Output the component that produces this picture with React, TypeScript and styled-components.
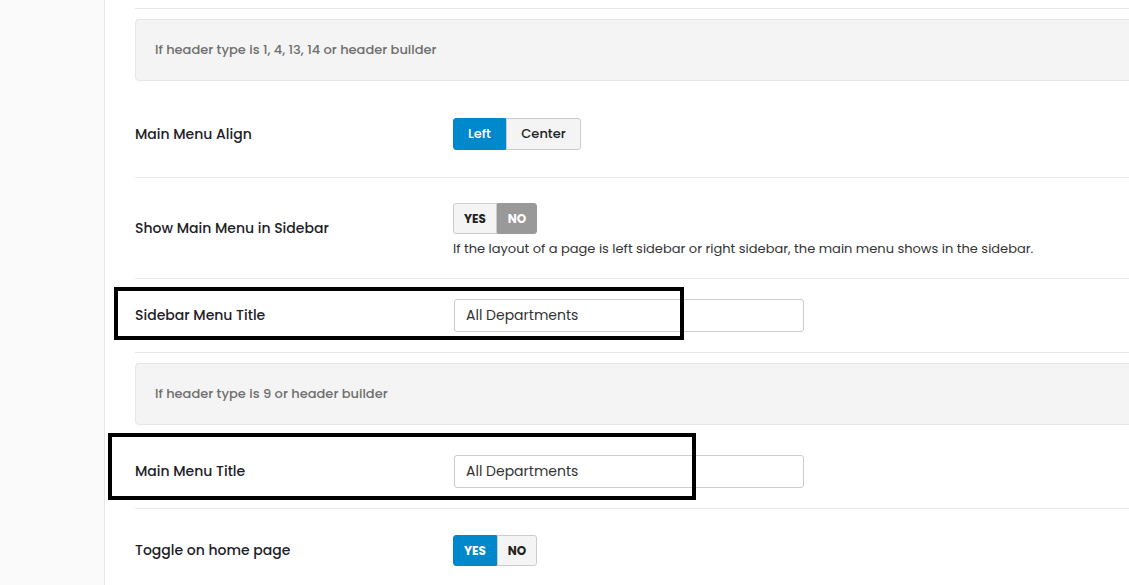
import React from "react";
import styled, { createGlobalStyle, css } from "styled-components";

const GlobalStyle = createGlobalStyle`
  html, body {
    margin: 0;
    padding: 0;
    background: #ffffff;
    overflow: hidden;
  }
  body {
    font-family: "Poppins", Inter, "Noto Sans", sans-serif;
    color: #1d2127;
  }
  * { box-sizing: border-box; }
`;

const Page = styled.div`
  display: flex;
  width: 1200px;
  height: 585px;
  overflow: hidden;
`;

const Sidebar = styled.aside`
  flex: 0 0 105px;
  background: #fafafa;
  border-right: 1px solid #e6e6e6;
`;

const Main = styled.main`
  flex: 1 1 auto;
  padding-left: 30px;
`;

const PrevRowEnd = styled.div`
  height: 9px;
  border-bottom: 1px solid #e8e8e8;
`;

const NoticeWrap = styled.div`
  padding: 10px 0;
`;

const Notice = styled.div`
  background: #f4f4f4;
  border: 1px solid #e6e6e6;
  border-radius: 4px;
  padding: 21px 19px;
  font-size: 13px;
  line-height: 18px;
  font-weight: 500;
  color: #6f6f6f;
`;

const Row = styled.div<{ $last?: boolean }>`
  position: relative;
  display: grid;
  grid-template-columns: 318px 1fr;
  align-items: center;
  padding: 20px 0;
  ${(p) =>
    !p.$last &&
    css`
      border-bottom: 1px solid #e8e8e8;
    `}
`;

const Label = styled.div`
  font-size: 14px;
  font-weight: 500;
  color: #1d2127;
`;

const Control = styled.div`
  display: flex;
  flex-direction: column;
  align-items: flex-start;
`;

const Group = styled.div<{ $top?: number; $bottom?: number }>`
  display: inline-flex;
  margin-top: ${(p) => p.$top ?? 0}px;
  margin-bottom: ${(p) => p.$bottom ?? 0}px;
`;

const SegButton = styled.button<{ $active?: boolean; $width: number; $height: number; $upper?: boolean; $muted?: boolean }>`
  width: ${(p) => p.$width}px;
  height: ${(p) => p.$height}px;
  padding: 0;
  font-family: inherit;
  font-size: ${(p) => (p.$upper ? 12 : 13)}px;
  font-weight: ${(p) => (p.$upper ? 700 : 500)};
  cursor: pointer;
  border: 1px solid #cccccc;
  background: #f4f4f4;
  color: #222;
  ${(p) =>
    p.$active &&
    css`
      background: #0088cc;
      border-color: #0088cc;
      color: #ffffff;
    `}
  ${(p) =>
    p.$muted &&
    css`
      background: #999999;
      border-color: #999999;
      color: #ffffff;
    `}
  &:first-child {
    border-radius: 3px 0 0 3px;
  }
  &:last-child {
    border-radius: 0 3px 3px 0;
  }
`;

const Description = styled.p`
  margin: 6px 0 0;
  font-size: 13px;
  line-height: 18px;
  color: #333;
`;

const TextInput = styled.input`
  width: 350px;
  height: 33px;
  margin-left: 1px;
  padding: 0 11px;
  border: 1px solid #cccccc;
  border-radius: 3px;
  font-family: inherit;
  font-size: 14px;
  font-weight: 400;
  color: #333;
  background: #fff;
  outline: none;
`;

const Highlight = styled.div<{ $top: number; $left: number; $w: number; $h: number }>`
  position: absolute;
  top: ${(p) => p.$top}px;
  left: ${(p) => p.$left}px;
  width: ${(p) => p.$w}px;
  height: ${(p) => p.$h}px;
  border: 4px solid #000;
  pointer-events: none;
`;

export default function App() {
  return (
    <>
      <GlobalStyle />
      <Page>
        <Sidebar />
        <Main>
          <PrevRowEnd />
          <NoticeWrap>
            <Notice>If header type is 1, 4, 13, 14 or header builder</Notice>
          </NoticeWrap>

          <Row>
            <Label>Main Menu Align</Label>
            <Control>
              <Group $top={7} $bottom={7}>
                <SegButton $active $width={53} $height={32}>Left</SegButton>
                <SegButton $width={75} $height={32}>Center</SegButton>
              </Group>
            </Control>
          </Row>

          <Row>
            <Label>Show Main Menu in Sidebar</Label>
            <Control>
              <Group $top={5}>
                <SegButton $upper $width={44} $height={31}>YES</SegButton>
                <SegButton $upper $muted $width={40} $height={31}>NO</SegButton>
              </Group>
              <Description>
                If the layout of a page is left sidebar or right sidebar, the main menu shows in the sidebar.
              </Description>
            </Control>
          </Row>

          <Row>
            <Label>Sidebar Menu Title</Label>
            <Control>
              <TextInput defaultValue="All Departments" />
            </Control>
            <Highlight $top={8} $left={-21} $w={570} $h={53} />
          </Row>

          <NoticeWrap>
            <Notice>If header type is 9 or header builder</Notice>
          </NoticeWrap>

          <Row>
            <Label>Main Menu Title</Label>
            <Control>
              <TextInput defaultValue="All Departments" />
            </Control>
            <Highlight $top={-2} $left={-27} $w={588} $h={67} />
          </Row>

          <Row $last>
            <Label>Toggle on home page</Label>
            <Control>
              <Group $top={6} $bottom={6}>
                <SegButton $upper $active $width={44} $height={31}>YES</SegButton>
                <SegButton $upper $width={40} $height={31}>NO</SegButton>
              </Group>
            </Control>
          </Row>
        </Main>
      </Page>
    </>
  );
}
